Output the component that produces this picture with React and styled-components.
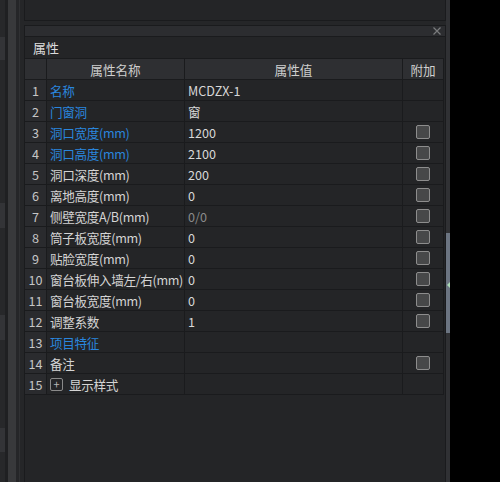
import React from 'react';
import styled, { createGlobalStyle } from 'styled-components';

const GlobalStyle = createGlobalStyle`
  html, body {
    margin: 0;
    padding: 0;
    background: #000;
  }
  body {
    font-family: "Noto Sans CJK SC", "Liberation Sans", sans-serif;
    font-size: 13px;
  }
  * { box-sizing: border-box; }
`;

const Screen = styled.div`
  display: flex;
  width: 500px;
  height: 482px;
  overflow: hidden;
  background: #000;
`;

const LeftDock = styled.div`
  display: flex;
  width: 24px;
  flex-shrink: 0;
  background: #252628;
`;

const TabStrip = styled.div`
  display: flex;
  flex-direction: column;
  width: 5px;
  background: #27282a;
`;

const TabMark = styled.div`
  height: ${(p) => p.h}px;
  margin-top: ${(p) => p.top}px;
  background: #333437;
`;

const DockGap = styled.div`
  width: 3px;
  background: #1f2022;
`;

const DockBar = styled.div`
  width: 8px;
  background: #38393b;
`;

const DockEdge = styled.div`
  width: 8px;
  background: #252628;
  border-left: 3px solid #252628;
  position: relative;
  &::after {
    content: '';
    position: absolute;
    left: 0;
    top: 0;
    bottom: 0;
    width: 1px;
    background: #303133;
  }
`;

const MainColumn = styled.div`
  display: flex;
  flex-direction: column;
  width: 422px;
  flex-shrink: 0;
  background: #252628;
`;

const TopPanel = styled.div`
  height: 21px;
  background: #242527;
  border: 1px solid #1a1b1d;
  border-top: none;
`;

const Panel = styled.div`
  flex: 1;
  margin-top: 4px;
  display: flex;
  flex-direction: column;
  background: #242527;
  border: 1px solid #1a1b1d;
  border-bottom: none;
`;

const PanelStrip = styled.div`
  height: 11px;
  background: #2c2d30;
  border-bottom: 1px solid #1a1b1d;
  display: flex;
  justify-content: flex-end;
  align-items: center;
  padding-right: 4px;
`;

const CloseIcon = styled.svg`
  width: 8px;
  height: 8px;
`;

const Title = styled.div`
  height: 21px;
  padding-left: 8px;
  display: flex;
  align-items: center;
  color: #dcdcdc;
  font-size: 13px;
`;

const Table = styled.div`
  width: 419px;
  border-top: 1px solid #1a1b1d;
`;

const Row = styled.div`
  display: flex;
  height: 21px;
  border-bottom: 1px solid #1a1b1d;
  background: ${(p) => (p.header ? '#2e2f32' : '#242527')};
`;

const Cell = styled.div`
  width: ${(p) => p.w}px;
  flex-shrink: 0;
  height: 100%;
  border-right: 1px solid #1a1b1d;
  display: flex;
  align-items: center;
  justify-content: ${(p) => (p.center ? 'center' : 'flex-start')};
  padding-left: ${(p) => (p.center ? 0 : 3)}px;
  white-space: nowrap;
  overflow: hidden;
  font-size: 12.6px;
  letter-spacing: ${(p) => (p.tight ? '-0.35px' : '0')};
  color: ${(p) => p.color || '#d4d4d4'};
  background: ${(p) => p.bg || 'transparent'};
`;

const Check = styled.div`
  width: 14px;
  height: 14px;
  border: 1px solid #8d8d8d;
  border-radius: 2px;
  background: #474849;
`;

const PlusBox = styled.div`
  width: 13px;
  height: 13px;
  border: 1px solid #8a8a8a;
  border-radius: 2px;
  margin-right: 6px;
  display: flex;
  align-items: center;
  justify-content: center;
  color: #b8b8b8;
  font-size: 11px;
  line-height: 1;
`;

const ScrollTrack = styled.div`
  width: 4px;
  flex-shrink: 0;
  background: #303134;
  display: flex;
  flex-direction: column;
  position: relative;
`;

const ScrollThumb = styled.div`
  margin-top: 233px;
  height: 100px;
  background: #6b7481;
`;

const Grip = styled.div`
  position: absolute;
  top: 282px;
  left: 1px;
  width: 0;
  height: 0;
  border-top: 3px solid transparent;
  border-bottom: 3px solid transparent;
  border-right: 3px solid #a9d6b5;
`;

const Void = styled.div`
  flex: 1;
  background: #000;
`;

const BLUE = '#2a86de';

const rows = [
  { name: '名称', value: 'MCDZX-1', blue: true },
  { name: '门窗洞', value: '窗', blue: true },
  { name: '洞口宽度(mm)', value: '1200', blue: true, check: true },
  { name: '洞口高度(mm)', value: '2100', blue: true, check: true },
  { name: '洞口深度(mm)', value: '200', check: true },
  { name: '离地高度(mm)', value: '0', check: true },
  { name: '侧壁宽度A/B(mm)', value: '0/0', dim: true, check: true },
  { name: '筒子板宽度(mm)', value: '0', check: true },
  { name: '贴脸宽度(mm)', value: '0', check: true },
  { name: '窗台板伸入墙左/右(mm)', value: '0', check: true },
  { name: '窗台板宽度(mm)', value: '0', check: true },
  { name: '调整系数', value: '1', check: true },
  { name: '项目特征', value: '', blue: true },
  { name: '备注', value: '', check: true },
  { name: '显示样式', value: '', plus: true },
];

const W = [22, 138, 218, 41];

export default function App() {
  return (
    <>
      <GlobalStyle />
      <Screen>
        <LeftDock>
          <TabStrip>
            <TabMark top={37} h={23} />
            <TabMark top={143} h={25} />
            <TabMark top={87} h={25} />
            <TabMark top={88} h={24} />
          </TabStrip>
          <DockGap />
          <DockBar />
          <DockEdge />
        </LeftDock>
        <MainColumn>
          <TopPanel />
          <Panel>
            <PanelStrip>
              <CloseIcon viewBox="0 0 8 8">
                <path d="M0.5 0.5 L7.5 7.5 M7.5 0.5 L0.5 7.5" stroke="#7a7b7d" strokeWidth="1.2" />
              </CloseIcon>
            </PanelStrip>
            <Title>属性</Title>
            <Table>
              <Row header>
                <Cell w={W[0]} center />
                <Cell w={W[1]} center color="#cfcfcf">属性名称</Cell>
                <Cell w={W[2]} center color="#cfcfcf">属性值</Cell>
                <Cell w={W[3]} center color="#cfcfcf">附加</Cell>
              </Row>
              {rows.map((r, i) => (
                <Row key={i}>
                  <Cell w={W[0]} center bg="#2a2b2e" color="#c6c6c6">{i + 1}</Cell>
                  <Cell w={W[1]} tight color={r.blue ? BLUE : '#d4d4d4'}>
                    {r.plus && <PlusBox>+</PlusBox>}
                    {r.name}
                  </Cell>
                  <Cell w={W[2]} color={r.dim ? '#8b8b8b' : '#d8d8d8'}>{r.value}</Cell>
                  <Cell w={W[3]} center>{r.check && <Check />}</Cell>
                </Row>
              ))}
            </Table>
          </Panel>
        </MainColumn>
        <ScrollTrack>
          <ScrollThumb />
          <Grip />
        </ScrollTrack>
        <Void />
      </Screen>
    </>
  );
}
